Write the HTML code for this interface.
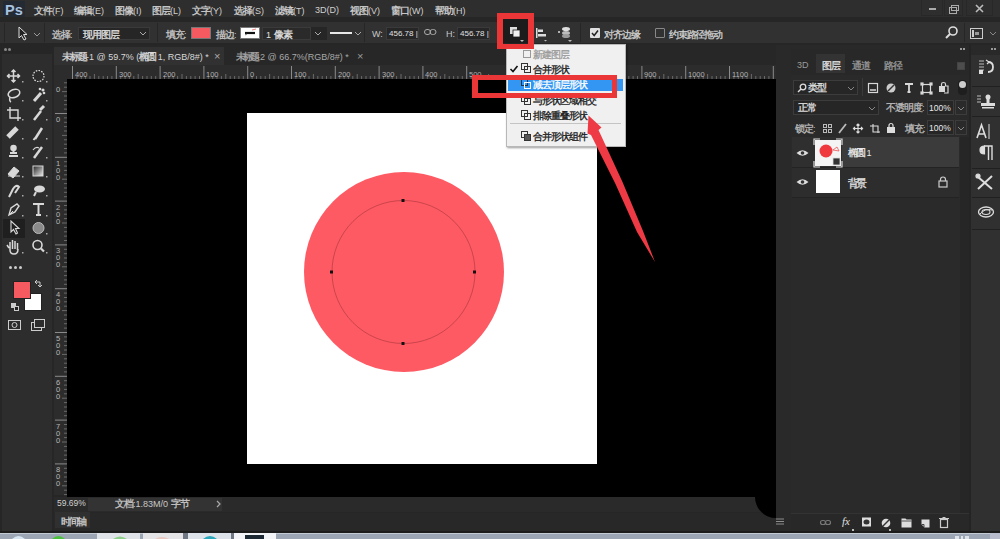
<!DOCTYPE html>
<html><head><meta charset="utf-8">
<style>
*{margin:0;padding:0;box-sizing:border-box}
html,body{width:1000px;height:539px;overflow:hidden;background:#262626;font-family:"Liberation Sans",sans-serif;color:#cfcfcf;font-size:9px}
.a{position:absolute}
.t{position:absolute;white-space:nowrap;line-height:1}
svg{position:absolute;overflow:visible}
#menubar{left:0;top:0;width:1000px;height:17px;background:#2e2e2e}
#opts{left:0;top:22px;width:1000px;height:21px;background:#313131}
#tool{left:2px;top:46px;width:50px;height:486px;background:#2d2d2d}
#tabs{left:54px;top:45px;width:723px;height:20px;background:#272727}
#hrul{left:54px;top:65px;width:723px;height:14px;background:#2c2c2c}
#vrul{left:54px;top:65px;width:13px;height:430px;background:#2c2c2c}
#canvas{left:67px;top:79px;width:709px;height:418px;background:#000}
#doc{left:247px;top:113px;width:350px;height:351px;background:#fff}
#status{left:54px;top:497px;width:722px;height:15px;background:#2a2a2a}
#timeline{left:54px;top:513px;width:736px;height:20px;background:#282828}
#right{left:776px;top:45px;width:224px;height:488px;background:#292929}
#layers{left:791px;top:49px;width:169px;height:484px;background:#2a2a2a}
#taskbar{left:0;top:533px;width:1000px;height:6px;background:#9ba5b3}
.menu{top:6px;font-size:9px;color:#d0d0d0}
.k{display:inline-block;width:9px;font-style:normal;font-size:1.15em;-webkit-text-stroke:0.3px currentColor;text-align:left}
.box{position:absolute;background:#262626;border:1px solid #3a3a3a}
</style></head><body>
<!-- menu bar -->
<div id="menubar" class="a"></div>
<div class="a" style="left:3px;top:1px;width:22px;height:16px;background:#232a34"></div><div class="t" style="left:5px;top:3px;font-size:14.5px;font-weight:bold;color:#a8c2e0;letter-spacing:0px">Ps</div>
<div class="t menu" style="left:34px"><i class="k">文</i><i class="k">件</i>(F)</div>
<div class="t menu" style="left:74px"><i class="k">编</i><i class="k">辑</i>(E)</div>
<div class="t menu" style="left:115px"><i class="k">图</i><i class="k">像</i>(I)</div>
<div class="t menu" style="left:152px"><i class="k">图</i><i class="k">层</i>(L)</div>
<div class="t menu" style="left:192px"><i class="k">文</i><i class="k">字</i>(Y)</div>
<div class="t menu" style="left:234px"><i class="k">选</i><i class="k">择</i>(S)</div>
<div class="t menu" style="left:275px"><i class="k">滤</i><i class="k">镜</i>(T)</div>
<div class="t menu" style="left:315px">3D(D)</div>
<div class="t menu" style="left:350px"><i class="k">视</i><i class="k">图</i>(V)</div>
<div class="t menu" style="left:391px"><i class="k">窗</i><i class="k">口</i>(W)</div>
<div class="t menu" style="left:435px"><i class="k">帮</i><i class="k">助</i>(H)</div>
<!-- window controls -->
<div class="a" style="left:921px;top:0px;width:22px;height:16px;border:1px solid #282828;border-top:none"></div><div class="a" style="left:944px;top:0px;width:19px;height:16px;border:1px solid #282828;border-top:none"></div><div class="a" style="left:966px;top:0px;width:27px;height:16px;border:1px solid #282828;border-top:none"></div>
<div class="a" style="left:929px;top:8px;width:7px;height:2px;background:#aaa"></div>
<svg style="left:948px;top:4px" width="12" height="10"><rect x="1.5" y="3.5" width="7" height="6" fill="none" stroke="#aaa"/><rect x="3.5" y="1.5" width="7" height="5" fill="none" stroke="#aaa"/></svg>
<svg style="left:975px;top:4px" width="10" height="10"><path d="M1 1L8 8M8 1L1 8" stroke="#bbb" stroke-width="1.6"/></svg>

<!-- options bar -->
<div id="opts" class="a"></div>
<div class="a" style="left:4px;top:23px;width:1px;height:19px;background:#262626"></div>
<svg style="left:18px;top:26px" width="10" height="15"><path d="M1 1L1 12L3.5 9.5L6 14L8 13L5.5 8.5L9 8.5Z" fill="#222" stroke="#ddd" stroke-width="1"/></svg>
<svg style="left:33px;top:32px" width="8" height="5"><path d="M1 1L4 4L7 1" fill="none" stroke="#999" stroke-width="1"/></svg>
<div class="a" style="left:44px;top:23px;width:1px;height:19px;background:#262626"></div>
<div class="t" style="left:52px;top:30px;color:#c8c8c8"><i class="k">选</i><i class="k">择</i>:</div>
<div class="box" style="left:78px;top:27px;width:72px;height:13px"></div>
<div class="t" style="left:83px;top:30px;color:#e0e0e0"><i class="k">现</i><i class="k">用</i><i class="k">图</i><i class="k">层</i></div>
<svg style="left:139px;top:31px" width="8" height="5"><path d="M1 1L4 4L7 1" fill="none" stroke="#aaa" stroke-width="1"/></svg>
<div class="a" style="left:157px;top:23px;width:1px;height:19px;background:#262626"></div>
<div class="t" style="left:166px;top:30px;color:#c8c8c8"><i class="k">填</i><i class="k">充</i>:</div>
<div class="a" style="left:191px;top:27px;width:20px;height:12px;background:#f45a5f;border:1px solid #777"></div>
<div class="t" style="left:216px;top:30px;color:#c8c8c8"><i class="k">描</i><i class="k">边</i>:</div>
<div class="a" style="left:240px;top:27px;width:20px;height:12px;background:#fff;border:1px solid #777"></div>
<svg style="left:240px;top:27px" width="20" height="12"><path d="M5 6H15" stroke="#111" stroke-width="2.2"/><path d="M12 3L16 2" stroke="#d66" stroke-width="0.8"/><path d="M5 8L7 7" stroke="#555" stroke-width="0.8"/></svg>
<div class="box" style="left:262px;top:27px;width:65px;height:13px;background:#2a2a2a"></div>
<div class="t" style="left:266px;top:30px;color:#e0e0e0">1 <i class="k">像</i><i class="k">素</i></div>
<div class="a" style="left:310px;top:27px;width:17px;height:13px;background:#262626;border-left:1px solid #3a3a3a"></div>
<svg style="left:314px;top:31px" width="8" height="5"><path d="M1 1L4 4L7 1" fill="none" stroke="#aaa" stroke-width="1"/></svg>
<div class="a" style="left:330px;top:32px;width:22px;height:2px;background:#e8e8e8"></div>
<svg style="left:354px;top:31px" width="8" height="5"><path d="M1 1L4 4L7 1" fill="none" stroke="#aaa" stroke-width="1"/></svg>
<div class="a" style="left:364px;top:23px;width:1px;height:19px;background:#262626"></div>
<div class="t" style="left:372px;top:30px;color:#c8c8c8;font-size:9px">W:</div>
<div class="box" style="left:386px;top:27px;width:33px;height:13px"></div>
<div class="t" style="left:389px;top:30px;color:#e0e0e0;font-size:8px">456.78 |</div>
<svg style="left:424px;top:28px" width="13" height="8"><rect x="0.5" y="1.5" width="6" height="5" rx="2.5" fill="none" stroke="#aaa"/><rect x="6" y="1.5" width="6" height="5" rx="2.5" fill="none" stroke="#aaa"/></svg>
<div class="t" style="left:446px;top:30px;color:#c8c8c8;font-size:9px">H:</div>
<div class="box" style="left:457px;top:27px;width:33px;height:13px"></div>
<div class="t" style="left:460px;top:30px;color:#e0e0e0;font-size:8px">456.78 |</div>
<!-- path ops button (highlighted with red box) -->
<div class="a" style="left:503px;top:19px;width:25px;height:24px;background:#1c1c1c"></div>
<svg style="left:509px;top:26px" width="14" height="14"><rect x="1" y="1" width="7" height="7" fill="#ddd"/><rect x="4" y="4" width="7" height="7" fill="#f0f0f0" stroke="#1c1c1c" stroke-width="0.8"/></svg>

<svg style="left:535px;top:26px" width="14" height="16"><rect x="1" y="2" width="1.5" height="10" fill="#ddd"/><rect x="3" y="3.5" width="5" height="2.5" fill="#ddd"/><rect x="3" y="8" width="8" height="2.5" fill="#ddd"/><path d="M9 14L12 14L10.5 15.5Z" fill="#bbb"/></svg><svg style="left:520px;top:40px" width="6" height="3"><path d="M0 0H4L2 2Z" fill="#bbb"/></svg><svg style="left:568px;top:40px" width="6" height="3"><path d="M0 0H4L2 2Z" fill="#bbb"/></svg>
<svg style="left:557px;top:24px" width="16" height="16"><ellipse cx="9" cy="5" rx="4" ry="2" fill="#ddd"/><ellipse cx="9" cy="9" rx="4" ry="2" fill="#bbb"/><ellipse cx="9" cy="12" rx="4" ry="2" fill="#999"/><circle cx="2" cy="8" r="1" fill="#ddd"/></svg>
<div class="a" style="left:580px;top:23px;width:1px;height:19px;background:#262626"></div>
<div class="a" style="left:590px;top:28px;width:10px;height:10px;background:#e0e0e0;border-radius:1px"></div>
<svg style="left:590px;top:28px" width="10" height="10"><path d="M2 5L4.2 7.5L8 2.5" fill="none" stroke="#222" stroke-width="1.5"/></svg>
<div class="t" style="left:604px;top:30px;color:#d0d0d0"><i class="k">对</i><i class="k">齐</i><i class="k">边</i><i class="k">缘</i></div>
<div class="a" style="left:655px;top:28px;width:10px;height:10px;border:1px solid #888;border-radius:1px"></div>
<div class="t" style="left:669px;top:30px;color:#d0d0d0;font-size:8.7px"><i class="k" style="width:8.8px">约</i><i class="k" style="width:8.8px">束</i><i class="k" style="width:8.8px">路</i><i class="k" style="width:8.8px">径</i><i class="k" style="width:8.8px">拖</i><i class="k" style="width:8.8px">动</i></div>
<svg style="left:945px;top:25px" width="14" height="14"><circle cx="8" cy="6" r="4" fill="none" stroke="#ddd" stroke-width="1.6"/><path d="M5 9L1 13" stroke="#ddd" stroke-width="2"/></svg>
<div class="a" style="left:964px;top:23px;width:1px;height:19px;background:#262626"></div>
<svg style="left:970px;top:28px" width="14" height="12"><rect x="0.5" y="0.5" width="12" height="10" fill="none" stroke="#ccc"/><rect x="2" y="2" width="2" height="7" fill="#ccc"/><rect x="5" y="4" width="4" height="3" fill="#999"/></svg>
<svg style="left:989px;top:31px" width="8" height="5"><path d="M1 1L4 4L7 1" fill="none" stroke="#888" stroke-width="1"/></svg>

<!-- toolbar -->
<div id="tool" class="a"></div>
<div class="a" style="left:2px;top:46px;width:50px;height:8px;background:#262626"></div>
<div class="a" style="left:4px;top:48px;width:3px;height:3px;background:#888;border-radius:50%"></div>
<div class="a" style="left:8px;top:48px;width:3px;height:3px;background:#888;border-radius:50%"></div>
<div id="tools">
<svg style="left:0;top:0" width="54" height="340"><rect x="22" y="81" width="1.5" height="1.5" fill="#aaa"/><rect x="46" y="81" width="1.5" height="1.5" fill="#aaa"/><rect x="22" y="100" width="1.5" height="1.5" fill="#aaa"/><rect x="46" y="100" width="1.5" height="1.5" fill="#aaa"/><rect x="22" y="119" width="1.5" height="1.5" fill="#aaa"/><rect x="46" y="119" width="1.5" height="1.5" fill="#aaa"/><rect x="22" y="138" width="1.5" height="1.5" fill="#aaa"/><rect x="46" y="138" width="1.5" height="1.5" fill="#aaa"/><rect x="22" y="157" width="1.5" height="1.5" fill="#aaa"/><rect x="46" y="157" width="1.5" height="1.5" fill="#aaa"/><rect x="22" y="176" width="1.5" height="1.5" fill="#aaa"/><rect x="46" y="176" width="1.5" height="1.5" fill="#aaa"/><rect x="22" y="195" width="1.5" height="1.5" fill="#aaa"/><rect x="46" y="195" width="1.5" height="1.5" fill="#aaa"/><rect x="22" y="215" width="1.5" height="1.5" fill="#aaa"/><rect x="46" y="215" width="1.5" height="1.5" fill="#aaa"/><rect x="22" y="233" width="1.5" height="1.5" fill="#aaa"/><rect x="46" y="233" width="1.5" height="1.5" fill="#aaa"/><rect x="22" y="252" width="1.5" height="1.5" fill="#aaa"/><rect x="46" y="252" width="1.5" height="1.5" fill="#aaa"/></svg>
<svg style="left:0;top:0" width="54" height="340" fill="none" stroke="#d8d8d8" stroke-width="1.5">
 <!-- move -->
 <path d="M13.5 70V82M7.5 76H19.5M11.5 72L13.5 70L15.5 72M11.5 80L13.5 82L15.5 80M9.5 74L7.5 76L9.5 78M17.5 74L19.5 76L17.5 78"/>
 <!-- marquee ellipse -->
 <circle cx="38.5" cy="76" r="5.5" stroke-dasharray="1.6 1.2" stroke-width="1.2"/>
 <!-- lasso -->
 <ellipse cx="14" cy="93.5" rx="6" ry="4" transform="rotate(-20 14 93.5)"/>
 <path d="M10 97Q9 101 11 102"/>
 <!-- quick select -->
 <path d="M34 101L41 93" stroke-width="3"/>
 <circle cx="43" cy="90" r="0.8" fill="#d8d8d8"/><circle cx="40" cy="89" r="0.6" fill="#d8d8d8"/><circle cx="44" cy="93" r="0.6" fill="#d8d8d8"/>
 <!-- crop -->
 <path d="M10 107V118H21M7 110H18V121" stroke-width="1.4"/>
 <!-- eyedropper -->
 <path d="M34 120L41 111" stroke-width="2.5"/><path d="M40 110L44 106" stroke-width="3"/>
 <!-- healing -->
 <path d="M8 137L17 128" stroke-width="5"/>
 <!-- brush -->
 <path d="M35 139L42 128" stroke-width="2.5"/><path d="M35 138L33.5 140" stroke-width="2"/>
 <!-- stamp -->
 <path d="M9 156H18M10 153H17" stroke-width="2"/><circle cx="13.5" cy="148" r="2.5" fill="#d8d8d8"/><path d="M13.5 150V153" stroke-width="2"/>
 <!-- history brush -->
 <path d="M34 158L42 147" stroke-width="2.5"/><path d="M33 150Q36 146 39 148" stroke-width="1.2"/>
 <!-- eraser -->
 <path d="M8 174L14 167L19 171L13 178Z" fill="#d8d8d8" stroke-width="1"/><path d="M8 176H20" stroke-width="1"/>
 <!-- gradient -->
 <rect x="33" y="166" width="10" height="10" fill="url(#gr)" stroke-width="1"/>
 <!-- smudge -->
 <path d="M9 197L13 189Q16 184 19 187L15 193" stroke-width="2"/>
 <!-- dodge -->
 <ellipse cx="39.5" cy="189" rx="5.5" ry="3.5" fill="#d8d8d8" stroke="none"/><path d="M36 192L34 196" stroke-width="2"/>
 <!-- pen -->
 <path d="M9 215L11 208L17 204L19 206L15 212Z" stroke-width="1.4"/><path d="M9 215L13 211" stroke-width="1"/>
 <!-- type -->
 <path d="M33 204H44M38.5 204V215M36 215H41" stroke-width="2"/>
</svg>
<div class="a" style="left:3px;top:219px;width:22px;height:19px;background:#1f1f1f"></div>
<svg style="left:0;top:0" width="54" height="340" fill="none" stroke="#d8d8d8" stroke-width="1.5">
 <!-- path select -->
 <path d="M11 221V232L13.5 229.5L16 234L17.5 233L15.5 228.5L19 228.5Z" stroke-width="1.1"/>
 <!-- ellipse -->
 <circle cx="38.5" cy="228" r="5.5" fill="#8a8a8a" stroke="#bbb" stroke-width="1"/>
 <!-- hand -->
 <path d="M10 250V242M12.5 249V240M15 249V241M17.5 250V243M10 250Q10 254 14 254Q18 254 18 249M9 248L7 245" stroke-width="1.5"/>
 <!-- zoom -->
 <circle cx="37.5" cy="245" r="4.5" stroke-width="1.6"/><path d="M41 248.5L44 251.5" stroke-width="2.2"/>
</svg>
<div class="a" style="left:9px;top:266px;width:3px;height:3px;background:#ccc;border-radius:50%"></div>
<div class="a" style="left:14px;top:266px;width:3px;height:3px;background:#ccc;border-radius:50%"></div>
<div class="a" style="left:19px;top:266px;width:3px;height:3px;background:#ccc;border-radius:50%"></div>
<div class="a" style="left:24px;top:293px;width:18px;height:18px;background:#fff;border:1px solid #222"></div>
<div class="a" style="left:13px;top:281px;width:18px;height:18px;background:#f45a5f;border:1px solid #222"></div>
<svg style="left:0;top:0" width="54" height="340" fill="none" stroke="#ccc" stroke-width="1">
 <path d="M35 282H40V287M38 285L40 287L42 285M37 280L35 282L37 284"/>
 <rect x="11.5" y="303.5" width="4" height="4" fill="#ccc"/><rect x="14.5" y="306.5" width="4" height="4" fill="#222"/>
 <rect x="8.5" y="320.5" width="12" height="9"/><circle cx="14.5" cy="325" r="2.5"/>
 <rect x="31.5" y="322.5" width="10" height="8"/><rect x="34.5" y="319.5" width="10" height="8" fill="#2d2d2d"/>
</svg>
<svg width="0" height="0"><defs><linearGradient id="gr" x1="0" y1="0" x2="1" y2="1"><stop offset="0" stop-color="#222"/><stop offset="1" stop-color="#eee"/></linearGradient></defs></svg>
</div>

<!-- tabs -->
<div id="tabs" class="a"></div>
<div class="a" style="left:54px;top:47px;width:170px;height:18px;background:#313131"></div>
<div class="t" style="left:62px;top:52px;color:#d8d8d8"><i class="k" style="width:8px">未</i><i class="k" style="width:8px">标</i><i class="k" style="width:8px">题</i>-1 @ 59.7% (<i class="k" style="width:8px">椭</i><i class="k" style="width:8px">圆</i> 1, RGB/8#) *</div>
<div class="t" style="left:214px;top:51px;color:#aaa;font-size:11px">×</div>
<div class="t" style="left:236px;top:52px;color:#a8a8a8"><i class="k" style="width:7px">未</i><i class="k" style="width:7px">标</i><i class="k" style="width:7px">题</i>-2 @ 66.7%(RGB/8#) *</div>
<div class="t" style="left:357px;top:51px;color:#999;font-size:11px">×</div>

<!-- rulers -->
<div id="hrul" class="a"></div>
<div id="vrul" class="a"></div>
<div id="rulers"><svg style="left:0;top:0" width="1000" height="539">
<rect x="72.0" y="66" width="1" height="13" fill="#8a8a8a"/>
<rect x="76.4" y="76" width="1" height="3" fill="#6a6a6a"/>
<rect x="80.8" y="76" width="1" height="3" fill="#6a6a6a"/>
<rect x="85.1" y="76" width="1" height="3" fill="#6a6a6a"/>
<rect x="89.5" y="76" width="1" height="3" fill="#6a6a6a"/>
<rect x="93.9" y="74" width="1" height="5" fill="#6a6a6a"/>
<rect x="98.3" y="76" width="1" height="3" fill="#6a6a6a"/>
<rect x="102.7" y="76" width="1" height="3" fill="#6a6a6a"/>
<rect x="107.0" y="76" width="1" height="3" fill="#6a6a6a"/>
<rect x="111.4" y="76" width="1" height="3" fill="#6a6a6a"/>
<rect x="115.8" y="66" width="1" height="13" fill="#8a8a8a"/>
<rect x="120.2" y="76" width="1" height="3" fill="#6a6a6a"/>
<rect x="124.6" y="76" width="1" height="3" fill="#6a6a6a"/>
<rect x="128.9" y="76" width="1" height="3" fill="#6a6a6a"/>
<rect x="133.3" y="76" width="1" height="3" fill="#6a6a6a"/>
<rect x="137.7" y="74" width="1" height="5" fill="#6a6a6a"/>
<rect x="142.1" y="76" width="1" height="3" fill="#6a6a6a"/>
<rect x="146.5" y="76" width="1" height="3" fill="#6a6a6a"/>
<rect x="150.8" y="76" width="1" height="3" fill="#6a6a6a"/>
<rect x="155.2" y="76" width="1" height="3" fill="#6a6a6a"/>
<rect x="159.6" y="66" width="1" height="13" fill="#8a8a8a"/>
<rect x="164.0" y="76" width="1" height="3" fill="#6a6a6a"/>
<rect x="168.4" y="76" width="1" height="3" fill="#6a6a6a"/>
<rect x="172.7" y="76" width="1" height="3" fill="#6a6a6a"/>
<rect x="177.1" y="76" width="1" height="3" fill="#6a6a6a"/>
<rect x="181.5" y="74" width="1" height="5" fill="#6a6a6a"/>
<rect x="185.9" y="76" width="1" height="3" fill="#6a6a6a"/>
<rect x="190.3" y="76" width="1" height="3" fill="#6a6a6a"/>
<rect x="194.6" y="76" width="1" height="3" fill="#6a6a6a"/>
<rect x="199.0" y="76" width="1" height="3" fill="#6a6a6a"/>
<rect x="203.4" y="66" width="1" height="13" fill="#8a8a8a"/>
<rect x="207.8" y="76" width="1" height="3" fill="#6a6a6a"/>
<rect x="212.2" y="76" width="1" height="3" fill="#6a6a6a"/>
<rect x="216.5" y="76" width="1" height="3" fill="#6a6a6a"/>
<rect x="220.9" y="76" width="1" height="3" fill="#6a6a6a"/>
<rect x="225.3" y="74" width="1" height="5" fill="#6a6a6a"/>
<rect x="229.7" y="76" width="1" height="3" fill="#6a6a6a"/>
<rect x="234.1" y="76" width="1" height="3" fill="#6a6a6a"/>
<rect x="238.4" y="76" width="1" height="3" fill="#6a6a6a"/>
<rect x="242.8" y="76" width="1" height="3" fill="#6a6a6a"/>
<rect x="247.2" y="66" width="1" height="13" fill="#8a8a8a"/>
<rect x="251.6" y="76" width="1" height="3" fill="#6a6a6a"/>
<rect x="256.0" y="76" width="1" height="3" fill="#6a6a6a"/>
<rect x="260.3" y="76" width="1" height="3" fill="#6a6a6a"/>
<rect x="264.7" y="76" width="1" height="3" fill="#6a6a6a"/>
<rect x="269.1" y="74" width="1" height="5" fill="#6a6a6a"/>
<rect x="273.5" y="76" width="1" height="3" fill="#6a6a6a"/>
<rect x="277.9" y="76" width="1" height="3" fill="#6a6a6a"/>
<rect x="282.2" y="76" width="1" height="3" fill="#6a6a6a"/>
<rect x="286.6" y="76" width="1" height="3" fill="#6a6a6a"/>
<rect x="291.0" y="66" width="1" height="13" fill="#8a8a8a"/>
<rect x="295.4" y="76" width="1" height="3" fill="#6a6a6a"/>
<rect x="299.8" y="76" width="1" height="3" fill="#6a6a6a"/>
<rect x="304.1" y="76" width="1" height="3" fill="#6a6a6a"/>
<rect x="308.5" y="76" width="1" height="3" fill="#6a6a6a"/>
<rect x="312.9" y="74" width="1" height="5" fill="#6a6a6a"/>
<rect x="317.3" y="76" width="1" height="3" fill="#6a6a6a"/>
<rect x="321.7" y="76" width="1" height="3" fill="#6a6a6a"/>
<rect x="326.0" y="76" width="1" height="3" fill="#6a6a6a"/>
<rect x="330.4" y="76" width="1" height="3" fill="#6a6a6a"/>
<rect x="334.8" y="66" width="1" height="13" fill="#8a8a8a"/>
<rect x="339.2" y="76" width="1" height="3" fill="#6a6a6a"/>
<rect x="343.6" y="76" width="1" height="3" fill="#6a6a6a"/>
<rect x="347.9" y="76" width="1" height="3" fill="#6a6a6a"/>
<rect x="352.3" y="76" width="1" height="3" fill="#6a6a6a"/>
<rect x="356.7" y="74" width="1" height="5" fill="#6a6a6a"/>
<rect x="361.1" y="76" width="1" height="3" fill="#6a6a6a"/>
<rect x="365.5" y="76" width="1" height="3" fill="#6a6a6a"/>
<rect x="369.8" y="76" width="1" height="3" fill="#6a6a6a"/>
<rect x="374.2" y="76" width="1" height="3" fill="#6a6a6a"/>
<rect x="378.6" y="66" width="1" height="13" fill="#8a8a8a"/>
<rect x="383.0" y="76" width="1" height="3" fill="#6a6a6a"/>
<rect x="387.4" y="76" width="1" height="3" fill="#6a6a6a"/>
<rect x="391.7" y="76" width="1" height="3" fill="#6a6a6a"/>
<rect x="396.1" y="76" width="1" height="3" fill="#6a6a6a"/>
<rect x="400.5" y="74" width="1" height="5" fill="#6a6a6a"/>
<rect x="404.9" y="76" width="1" height="3" fill="#6a6a6a"/>
<rect x="409.3" y="76" width="1" height="3" fill="#6a6a6a"/>
<rect x="413.6" y="76" width="1" height="3" fill="#6a6a6a"/>
<rect x="418.0" y="76" width="1" height="3" fill="#6a6a6a"/>
<rect x="422.4" y="66" width="1" height="13" fill="#8a8a8a"/>
<rect x="426.8" y="76" width="1" height="3" fill="#6a6a6a"/>
<rect x="431.2" y="76" width="1" height="3" fill="#6a6a6a"/>
<rect x="435.5" y="76" width="1" height="3" fill="#6a6a6a"/>
<rect x="439.9" y="76" width="1" height="3" fill="#6a6a6a"/>
<rect x="444.3" y="74" width="1" height="5" fill="#6a6a6a"/>
<rect x="448.7" y="76" width="1" height="3" fill="#6a6a6a"/>
<rect x="453.1" y="76" width="1" height="3" fill="#6a6a6a"/>
<rect x="457.4" y="76" width="1" height="3" fill="#6a6a6a"/>
<rect x="461.8" y="76" width="1" height="3" fill="#6a6a6a"/>
<rect x="466.2" y="66" width="1" height="13" fill="#8a8a8a"/>
<rect x="470.6" y="76" width="1" height="3" fill="#6a6a6a"/>
<rect x="475.0" y="76" width="1" height="3" fill="#6a6a6a"/>
<rect x="479.3" y="76" width="1" height="3" fill="#6a6a6a"/>
<rect x="483.7" y="76" width="1" height="3" fill="#6a6a6a"/>
<rect x="488.1" y="74" width="1" height="5" fill="#6a6a6a"/>
<rect x="492.5" y="76" width="1" height="3" fill="#6a6a6a"/>
<rect x="496.9" y="76" width="1" height="3" fill="#6a6a6a"/>
<rect x="501.2" y="76" width="1" height="3" fill="#6a6a6a"/>
<rect x="505.6" y="76" width="1" height="3" fill="#6a6a6a"/>
<rect x="510.0" y="66" width="1" height="13" fill="#8a8a8a"/>
<rect x="514.4" y="76" width="1" height="3" fill="#6a6a6a"/>
<rect x="518.8" y="76" width="1" height="3" fill="#6a6a6a"/>
<rect x="523.1" y="76" width="1" height="3" fill="#6a6a6a"/>
<rect x="527.5" y="76" width="1" height="3" fill="#6a6a6a"/>
<rect x="531.9" y="74" width="1" height="5" fill="#6a6a6a"/>
<rect x="536.3" y="76" width="1" height="3" fill="#6a6a6a"/>
<rect x="540.7" y="76" width="1" height="3" fill="#6a6a6a"/>
<rect x="545.0" y="76" width="1" height="3" fill="#6a6a6a"/>
<rect x="549.4" y="76" width="1" height="3" fill="#6a6a6a"/>
<rect x="553.8" y="66" width="1" height="13" fill="#8a8a8a"/>
<rect x="558.2" y="76" width="1" height="3" fill="#6a6a6a"/>
<rect x="562.6" y="76" width="1" height="3" fill="#6a6a6a"/>
<rect x="566.9" y="76" width="1" height="3" fill="#6a6a6a"/>
<rect x="571.3" y="76" width="1" height="3" fill="#6a6a6a"/>
<rect x="575.7" y="74" width="1" height="5" fill="#6a6a6a"/>
<rect x="580.1" y="76" width="1" height="3" fill="#6a6a6a"/>
<rect x="584.5" y="76" width="1" height="3" fill="#6a6a6a"/>
<rect x="588.8" y="76" width="1" height="3" fill="#6a6a6a"/>
<rect x="593.2" y="76" width="1" height="3" fill="#6a6a6a"/>
<rect x="597.6" y="66" width="1" height="13" fill="#8a8a8a"/>
<rect x="602.0" y="76" width="1" height="3" fill="#6a6a6a"/>
<rect x="606.4" y="76" width="1" height="3" fill="#6a6a6a"/>
<rect x="610.7" y="76" width="1" height="3" fill="#6a6a6a"/>
<rect x="615.1" y="76" width="1" height="3" fill="#6a6a6a"/>
<rect x="619.5" y="74" width="1" height="5" fill="#6a6a6a"/>
<rect x="623.9" y="76" width="1" height="3" fill="#6a6a6a"/>
<rect x="628.3" y="76" width="1" height="3" fill="#6a6a6a"/>
<rect x="632.6" y="76" width="1" height="3" fill="#6a6a6a"/>
<rect x="637.0" y="76" width="1" height="3" fill="#6a6a6a"/>
<rect x="641.4" y="66" width="1" height="13" fill="#8a8a8a"/>
<rect x="645.8" y="76" width="1" height="3" fill="#6a6a6a"/>
<rect x="650.2" y="76" width="1" height="3" fill="#6a6a6a"/>
<rect x="654.5" y="76" width="1" height="3" fill="#6a6a6a"/>
<rect x="658.9" y="76" width="1" height="3" fill="#6a6a6a"/>
<rect x="663.3" y="74" width="1" height="5" fill="#6a6a6a"/>
<rect x="667.7" y="76" width="1" height="3" fill="#6a6a6a"/>
<rect x="672.1" y="76" width="1" height="3" fill="#6a6a6a"/>
<rect x="676.4" y="76" width="1" height="3" fill="#6a6a6a"/>
<rect x="680.8" y="76" width="1" height="3" fill="#6a6a6a"/>
<rect x="685.2" y="66" width="1" height="13" fill="#8a8a8a"/>
<rect x="689.6" y="76" width="1" height="3" fill="#6a6a6a"/>
<rect x="694.0" y="76" width="1" height="3" fill="#6a6a6a"/>
<rect x="698.3" y="76" width="1" height="3" fill="#6a6a6a"/>
<rect x="702.7" y="76" width="1" height="3" fill="#6a6a6a"/>
<rect x="707.1" y="74" width="1" height="5" fill="#6a6a6a"/>
<rect x="711.5" y="76" width="1" height="3" fill="#6a6a6a"/>
<rect x="715.9" y="76" width="1" height="3" fill="#6a6a6a"/>
<rect x="720.2" y="76" width="1" height="3" fill="#6a6a6a"/>
<rect x="724.6" y="76" width="1" height="3" fill="#6a6a6a"/>
<rect x="729.0" y="66" width="1" height="13" fill="#8a8a8a"/>
<rect x="733.4" y="76" width="1" height="3" fill="#6a6a6a"/>
<rect x="737.8" y="76" width="1" height="3" fill="#6a6a6a"/>
<rect x="742.1" y="76" width="1" height="3" fill="#6a6a6a"/>
<rect x="746.5" y="76" width="1" height="3" fill="#6a6a6a"/>
<rect x="750.9" y="74" width="1" height="5" fill="#6a6a6a"/>
<rect x="755.3" y="76" width="1" height="3" fill="#6a6a6a"/>
<rect x="759.7" y="76" width="1" height="3" fill="#6a6a6a"/>
<rect x="764.0" y="76" width="1" height="3" fill="#6a6a6a"/>
<rect x="768.4" y="76" width="1" height="3" fill="#6a6a6a"/>
<rect x="772.8" y="66" width="1" height="13" fill="#8a8a8a"/>
<rect x="64" y="82.3" width="3" height="1" fill="#6a6a6a"/>
<rect x="64" y="86.7" width="3" height="1" fill="#6a6a6a"/>
<rect x="62" y="91.1" width="5" height="1" fill="#6a6a6a"/>
<rect x="64" y="95.5" width="3" height="1" fill="#6a6a6a"/>
<rect x="64" y="99.9" width="3" height="1" fill="#6a6a6a"/>
<rect x="64" y="104.2" width="3" height="1" fill="#6a6a6a"/>
<rect x="64" y="108.6" width="3" height="1" fill="#6a6a6a"/>
<rect x="55" y="113.0" width="12" height="1" fill="#8a8a8a"/>
<rect x="64" y="117.4" width="3" height="1" fill="#6a6a6a"/>
<rect x="64" y="121.8" width="3" height="1" fill="#6a6a6a"/>
<rect x="64" y="126.1" width="3" height="1" fill="#6a6a6a"/>
<rect x="64" y="130.5" width="3" height="1" fill="#6a6a6a"/>
<rect x="62" y="134.9" width="5" height="1" fill="#6a6a6a"/>
<rect x="64" y="139.3" width="3" height="1" fill="#6a6a6a"/>
<rect x="64" y="143.7" width="3" height="1" fill="#6a6a6a"/>
<rect x="64" y="148.0" width="3" height="1" fill="#6a6a6a"/>
<rect x="64" y="152.4" width="3" height="1" fill="#6a6a6a"/>
<rect x="55" y="156.8" width="12" height="1" fill="#8a8a8a"/>
<rect x="64" y="161.2" width="3" height="1" fill="#6a6a6a"/>
<rect x="64" y="165.6" width="3" height="1" fill="#6a6a6a"/>
<rect x="64" y="169.9" width="3" height="1" fill="#6a6a6a"/>
<rect x="64" y="174.3" width="3" height="1" fill="#6a6a6a"/>
<rect x="62" y="178.7" width="5" height="1" fill="#6a6a6a"/>
<rect x="64" y="183.1" width="3" height="1" fill="#6a6a6a"/>
<rect x="64" y="187.5" width="3" height="1" fill="#6a6a6a"/>
<rect x="64" y="191.8" width="3" height="1" fill="#6a6a6a"/>
<rect x="64" y="196.2" width="3" height="1" fill="#6a6a6a"/>
<rect x="55" y="200.6" width="12" height="1" fill="#8a8a8a"/>
<rect x="64" y="205.0" width="3" height="1" fill="#6a6a6a"/>
<rect x="64" y="209.4" width="3" height="1" fill="#6a6a6a"/>
<rect x="64" y="213.7" width="3" height="1" fill="#6a6a6a"/>
<rect x="64" y="218.1" width="3" height="1" fill="#6a6a6a"/>
<rect x="62" y="222.5" width="5" height="1" fill="#6a6a6a"/>
<rect x="64" y="226.9" width="3" height="1" fill="#6a6a6a"/>
<rect x="64" y="231.3" width="3" height="1" fill="#6a6a6a"/>
<rect x="64" y="235.6" width="3" height="1" fill="#6a6a6a"/>
<rect x="64" y="240.0" width="3" height="1" fill="#6a6a6a"/>
<rect x="55" y="244.4" width="12" height="1" fill="#8a8a8a"/>
<rect x="64" y="248.8" width="3" height="1" fill="#6a6a6a"/>
<rect x="64" y="253.2" width="3" height="1" fill="#6a6a6a"/>
<rect x="64" y="257.5" width="3" height="1" fill="#6a6a6a"/>
<rect x="64" y="261.9" width="3" height="1" fill="#6a6a6a"/>
<rect x="62" y="266.3" width="5" height="1" fill="#6a6a6a"/>
<rect x="64" y="270.7" width="3" height="1" fill="#6a6a6a"/>
<rect x="64" y="275.1" width="3" height="1" fill="#6a6a6a"/>
<rect x="64" y="279.4" width="3" height="1" fill="#6a6a6a"/>
<rect x="64" y="283.8" width="3" height="1" fill="#6a6a6a"/>
<rect x="55" y="288.2" width="12" height="1" fill="#8a8a8a"/>
<rect x="64" y="292.6" width="3" height="1" fill="#6a6a6a"/>
<rect x="64" y="297.0" width="3" height="1" fill="#6a6a6a"/>
<rect x="64" y="301.3" width="3" height="1" fill="#6a6a6a"/>
<rect x="64" y="305.7" width="3" height="1" fill="#6a6a6a"/>
<rect x="62" y="310.1" width="5" height="1" fill="#6a6a6a"/>
<rect x="64" y="314.5" width="3" height="1" fill="#6a6a6a"/>
<rect x="64" y="318.9" width="3" height="1" fill="#6a6a6a"/>
<rect x="64" y="323.2" width="3" height="1" fill="#6a6a6a"/>
<rect x="64" y="327.6" width="3" height="1" fill="#6a6a6a"/>
<rect x="55" y="332.0" width="12" height="1" fill="#8a8a8a"/>
<rect x="64" y="336.4" width="3" height="1" fill="#6a6a6a"/>
<rect x="64" y="340.8" width="3" height="1" fill="#6a6a6a"/>
<rect x="64" y="345.1" width="3" height="1" fill="#6a6a6a"/>
<rect x="64" y="349.5" width="3" height="1" fill="#6a6a6a"/>
<rect x="62" y="353.9" width="5" height="1" fill="#6a6a6a"/>
<rect x="64" y="358.3" width="3" height="1" fill="#6a6a6a"/>
<rect x="64" y="362.7" width="3" height="1" fill="#6a6a6a"/>
<rect x="64" y="367.0" width="3" height="1" fill="#6a6a6a"/>
<rect x="64" y="371.4" width="3" height="1" fill="#6a6a6a"/>
<rect x="55" y="375.8" width="12" height="1" fill="#8a8a8a"/>
<rect x="64" y="380.2" width="3" height="1" fill="#6a6a6a"/>
<rect x="64" y="384.6" width="3" height="1" fill="#6a6a6a"/>
<rect x="64" y="388.9" width="3" height="1" fill="#6a6a6a"/>
<rect x="64" y="393.3" width="3" height="1" fill="#6a6a6a"/>
<rect x="62" y="397.7" width="5" height="1" fill="#6a6a6a"/>
<rect x="64" y="402.1" width="3" height="1" fill="#6a6a6a"/>
<rect x="64" y="406.5" width="3" height="1" fill="#6a6a6a"/>
<rect x="64" y="410.8" width="3" height="1" fill="#6a6a6a"/>
<rect x="64" y="415.2" width="3" height="1" fill="#6a6a6a"/>
<rect x="55" y="419.6" width="12" height="1" fill="#8a8a8a"/>
<rect x="64" y="424.0" width="3" height="1" fill="#6a6a6a"/>
<rect x="64" y="428.4" width="3" height="1" fill="#6a6a6a"/>
<rect x="64" y="432.7" width="3" height="1" fill="#6a6a6a"/>
<rect x="64" y="437.1" width="3" height="1" fill="#6a6a6a"/>
<rect x="62" y="441.5" width="5" height="1" fill="#6a6a6a"/>
<rect x="64" y="445.9" width="3" height="1" fill="#6a6a6a"/>
<rect x="64" y="450.3" width="3" height="1" fill="#6a6a6a"/>
<rect x="64" y="454.6" width="3" height="1" fill="#6a6a6a"/>
<rect x="64" y="459.0" width="3" height="1" fill="#6a6a6a"/>
<rect x="55" y="463.4" width="12" height="1" fill="#8a8a8a"/>
<rect x="64" y="467.8" width="3" height="1" fill="#6a6a6a"/>
<rect x="64" y="472.2" width="3" height="1" fill="#6a6a6a"/>
<rect x="64" y="476.5" width="3" height="1" fill="#6a6a6a"/>
<rect x="64" y="480.9" width="3" height="1" fill="#6a6a6a"/>
<rect x="62" y="485.3" width="5" height="1" fill="#6a6a6a"/>
<rect x="64" y="489.7" width="3" height="1" fill="#6a6a6a"/>
<rect x="64" y="494.1" width="3" height="1" fill="#6a6a6a"/>
</svg>
<div class="t" style="left:75px;top:71px;font-size:7.5px;color:#b0b0b0">400</div>
<div class="t" style="left:119px;top:71px;font-size:7.5px;color:#b0b0b0">300</div>
<div class="t" style="left:163px;top:71px;font-size:7.5px;color:#b0b0b0">200</div>
<div class="t" style="left:206px;top:71px;font-size:7.5px;color:#b0b0b0">100</div>
<div class="t" style="left:250px;top:71px;font-size:7.5px;color:#b0b0b0">0</div>
<div class="t" style="left:294px;top:71px;font-size:7.5px;color:#b0b0b0">100</div>
<div class="t" style="left:338px;top:71px;font-size:7.5px;color:#b0b0b0">200</div>
<div class="t" style="left:382px;top:71px;font-size:7.5px;color:#b0b0b0">300</div>
<div class="t" style="left:425px;top:71px;font-size:7.5px;color:#b0b0b0">400</div>
<div class="t" style="left:469px;top:71px;font-size:7.5px;color:#b0b0b0">500</div>
<div class="t" style="left:513px;top:71px;font-size:7.5px;color:#b0b0b0">600</div>
<div class="t" style="left:557px;top:71px;font-size:7.5px;color:#b0b0b0">700</div>
<div class="t" style="left:601px;top:71px;font-size:7.5px;color:#b0b0b0">800</div>
<div class="t" style="left:644px;top:71px;font-size:7.5px;color:#b0b0b0">900</div>
<div class="t" style="left:688px;top:71px;font-size:7.5px;color:#b0b0b0">1000</div>
<div class="t" style="left:732px;top:71px;font-size:7.5px;color:#b0b0b0">1100</div>
<div class="t" style="left:776px;top:71px;font-size:7.5px;color:#b0b0b0">1</div>
<div class="t" style="left:56px;top:86px;font-size:7.5px;color:#b8b8b8">0</div>
<div class="t" style="left:56px;top:116px;font-size:7.5px;color:#b8b8b8">0</div>
<div class="t" style="left:56px;top:160px;font-size:7.5px;color:#b8b8b8">1</div>
<div class="t" style="left:56px;top:167px;font-size:7.5px;color:#b8b8b8">0</div>
<div class="t" style="left:56px;top:174px;font-size:7.5px;color:#b8b8b8">0</div>
<div class="t" style="left:56px;top:204px;font-size:7.5px;color:#b8b8b8">2</div>
<div class="t" style="left:56px;top:211px;font-size:7.5px;color:#b8b8b8">0</div>
<div class="t" style="left:56px;top:218px;font-size:7.5px;color:#b8b8b8">0</div>
<div class="t" style="left:56px;top:247px;font-size:7.5px;color:#b8b8b8">3</div>
<div class="t" style="left:56px;top:254px;font-size:7.5px;color:#b8b8b8">0</div>
<div class="t" style="left:56px;top:261px;font-size:7.5px;color:#b8b8b8">0</div>
<div class="t" style="left:56px;top:291px;font-size:7.5px;color:#b8b8b8">4</div>
<div class="t" style="left:56px;top:298px;font-size:7.5px;color:#b8b8b8">0</div>
<div class="t" style="left:56px;top:305px;font-size:7.5px;color:#b8b8b8">0</div>
<div class="t" style="left:56px;top:335px;font-size:7.5px;color:#b8b8b8">5</div>
<div class="t" style="left:56px;top:342px;font-size:7.5px;color:#b8b8b8">0</div>
<div class="t" style="left:56px;top:349px;font-size:7.5px;color:#b8b8b8">0</div>
<div class="t" style="left:56px;top:379px;font-size:7.5px;color:#b8b8b8">6</div>
<div class="t" style="left:56px;top:386px;font-size:7.5px;color:#b8b8b8">0</div>
<div class="t" style="left:56px;top:393px;font-size:7.5px;color:#b8b8b8">0</div>
<div class="t" style="left:56px;top:423px;font-size:7.5px;color:#b8b8b8">7</div>
<div class="t" style="left:56px;top:430px;font-size:7.5px;color:#b8b8b8">0</div>
<div class="t" style="left:56px;top:437px;font-size:7.5px;color:#b8b8b8">0</div>
<div class="t" style="left:56px;top:466px;font-size:7.5px;color:#b8b8b8">8</div>
<div class="t" style="left:56px;top:473px;font-size:7.5px;color:#b8b8b8">0</div>
<div class="t" style="left:56px;top:480px;font-size:7.5px;color:#b8b8b8">0</div>
<div class="a" style="left:54px;top:65px;width:13px;height:14px;background:#2c2c2c"></div></div>

<!-- canvas -->
<div id="canvas" class="a"></div>
<div id="doc" class="a"></div>
<svg style="left:0;top:0" width="1000" height="539">
  <circle cx="404" cy="272" r="100" fill="#fd5a64"/>
  <circle cx="403.5" cy="272" r="71.5" fill="none" stroke="#9a2e31" stroke-width="0.5"/>
  <rect x="401.5" y="199" width="3" height="3" fill="#111"/>
  <rect x="401.5" y="342" width="3" height="3" fill="#111"/>
  <rect x="330" y="270.5" width="3" height="3" fill="#111"/>
  <rect x="473" y="270.5" width="3" height="3" fill="#111"/>
</svg>

<!-- status / timeline -->
<div id="status" class="a"></div>
<div class="a" style="left:88px;top:498px;width:134px;height:13px;background:#333"></div>
<div class="t" style="left:57px;top:499px;color:#d0d0d0;font-size:8.5px">59.69%</div>
<div class="t" style="left:115px;top:499px;color:#c8c8c8;font-size:9px"><i class="k">文</i><i class="k">档</i>:1.83M/0 <i class="k">字</i><i class="k">节</i></div>
<svg style="left:216px;top:500px" width="6" height="8"><path d="M1 1L4 4L1 7" fill="none" stroke="#aaa" stroke-width="1.2"/></svg>
<div id="timeline" class="a"></div>
<svg style="left:0;top:0" width="1000" height="539"><path d="M755 497A21 21 0 0 0 776 518V497Z" fill="#000"/></svg>
<div class="a" style="left:55px;top:512px;width:35px;height:16px;background:#303030"></div>
<div class="t" style="left:61px;top:517px;color:#d0d0d0;font-size:9px"><i class="k" style="width:8px">时</i><i class="k" style="width:8px">间</i><i class="k" style="width:8px">轴</i></div>

<!-- right panels -->
<div id="right" class="a"></div>
<div id="layers" class="a"></div>
<div id="rightpanel">
<!-- panel tabs strip -->
<div class="a" style="left:791px;top:49px;width:178px;height:26px;background:#282828"></div>
<div class="a" style="left:816px;top:54px;width:29px;height:19px;background:#333"></div>
<div class="t" style="left:797px;top:61px;color:#9a9a9a;font-size:9px">3D</div>
<div class="t" style="left:822px;top:61px;color:#e0e0e0;font-size:9px"><i class="k">图</i><i class="k">层</i></div>
<div class="t" style="left:852px;top:61px;color:#9a9a9a;font-size:9px"><i class="k">通</i><i class="k">道</i></div>
<div class="t" style="left:884px;top:61px;color:#9a9a9a;font-size:9px"><i class="k">路</i><i class="k">径</i></div>
<svg style="left:956px;top:61px" width="10" height="10"><rect x="1" y="1" width="8" height="8" fill="#444"/><path d="M2 3H8M2 5H8M2 7H8" stroke="#666" stroke-width="0.6"/></svg>
<div class="a" style="left:960px;top:48px;width:2px;height:2px;background:#999"></div>
<div class="a" style="left:963px;top:48px;width:2px;height:2px;background:#999"></div>
<div class="a" style="left:991px;top:48px;width:2px;height:2px;background:#999"></div>
<div class="a" style="left:994px;top:48px;width:2px;height:2px;background:#999"></div>
<!-- filter row -->
<div class="box" style="left:793px;top:80px;width:65px;height:15px;background:#262626;border-color:#3c3c3c"></div>
<svg style="left:797px;top:83px" width="10" height="10"><circle cx="6" cy="4" r="2.8" fill="none" stroke="#ddd" stroke-width="1.3"/><path d="M4 6L1 9" stroke="#ddd" stroke-width="1.5"/></svg>
<div class="t" style="left:808px;top:83px;color:#e0e0e0;font-size:9px"><i class="k">类</i><i class="k">型</i></div>
<svg style="left:847px;top:86px" width="8" height="5"><path d="M1 1L4 4L7 1" fill="none" stroke="#888" stroke-width="1"/></svg>
<div class="a" style="left:862px;top:78px;width:1px;height:18px;background:#3a3a3a"></div>
<svg style="left:0;top:0" width="1000" height="539" fill="none" stroke="#d8d8d8" stroke-width="1.2">
 <rect x="868.5" y="83.5" width="9" height="9"/><path d="M870 90H876" stroke-width="1.5"/>
 <circle cx="891" cy="88" r="4.5" fill="#ccc" stroke="none"/><path d="M888 91L894 85" stroke="#333" stroke-width="1.4"/>
 <path d="M905 84H913M909 84V92M907.5 92H910.5" stroke-width="1.8"/>
 <rect x="922.5" y="84.5" width="8" height="8"/><rect x="921" y="83" width="2" height="2" fill="#d8d8d8"/><rect x="930" y="83" width="2" height="2" fill="#d8d8d8"/><rect x="921" y="92" width="2" height="2" fill="#d8d8d8"/><rect x="930" y="92" width="2" height="2" fill="#d8d8d8"/>
 <path d="M941.5 86V84Q941.5 82.5 943.5 82.5Q945.5 82.5 945.5 84V86" /><rect x="939" y="86" width="6" height="6" fill="#d8d8d8" stroke="none"/><path d="M945 86H948V93H944" />
</svg>
<div class="a" style="left:958px;top:80px;width:9px;height:15px;background:#1e1e1e;border-radius:4px"></div>
<div class="a" style="left:959px;top:81px;width:7px;height:7px;background:#ccc;border-radius:50%"></div>
<!-- blend row -->
<div class="box" style="left:793px;top:100px;width:86px;height:15px;background:#262626;border-color:#3c3c3c"></div>
<div class="t" style="left:798px;top:103px;color:#e0e0e0;font-size:9px"><i class="k">正</i><i class="k">常</i></div>
<svg style="left:868px;top:106px" width="8" height="5"><path d="M1 1L4 4L7 1" fill="none" stroke="#888" stroke-width="1"/></svg>
<div class="t" style="left:886px;top:103px;color:#bdbdbd;font-size:9px"><i class="k">不</i><i class="k">透</i><i class="k">明</i><i class="k">度</i>:</div>
<div class="box" style="left:927px;top:100px;width:27px;height:15px;background:#262626;border-color:#3c3c3c"></div>
<div class="t" style="left:929px;top:104px;color:#e8e8e8;font-size:8.5px">100%</div>
<div class="box" style="left:955px;top:100px;width:12px;height:15px;background:#2a2a2a;border-color:#3c3c3c"></div>
<svg style="left:957px;top:106px" width="8" height="5"><path d="M1 1L4 4L7 1" fill="none" stroke="#888" stroke-width="1"/></svg>
<!-- lock row -->
<div class="t" style="left:795px;top:124px;color:#bdbdbd;font-size:9px"><i class="k">锁</i><i class="k">定</i>:</div>
<svg style="left:0;top:0" width="1000" height="539" fill="none" stroke="#bbb" stroke-width="1">
 <rect x="823.5" y="124.5" width="3" height="3"/><rect x="828.5" y="124.5" width="3" height="3"/><rect x="823.5" y="129.5" width="3" height="3"/><rect x="828.5" y="129.5" width="3" height="3"/>
 <path d="M839 133L846 124" stroke-width="1.8"/>
 <path d="M858 124V133M853.5 128.5H862.5M856.5 125.5L858 124L859.5 125.5M856.5 131.5L858 133L859.5 131.5M855 127L853.5 128.5L855 130M861 127L862.5 128.5L861 130" stroke="#ddd" stroke-width="1.2"/>
 <path d="M873 124V132H880M870 126H878V133" stroke="#ddd" stroke-width="1.1"/>
 <path d="M889 127V125.5Q889 123.5 891 123.5Q893 123.5 893 125.5V127" stroke="#ddd" stroke-width="1.2"/><rect x="887" y="127" width="8" height="6" fill="#ddd" stroke="none"/>
</svg>
<div class="t" style="left:905px;top:124px;color:#bdbdbd;font-size:9px"><i class="k">填</i><i class="k">充</i>:</div>
<div class="box" style="left:927px;top:120px;width:27px;height:15px;background:#262626;border-color:#3c3c3c"></div>
<div class="t" style="left:929px;top:124px;color:#e8e8e8;font-size:8.5px">100%</div>
<div class="box" style="left:955px;top:120px;width:12px;height:15px;background:#2a2a2a;border-color:#3c3c3c"></div>
<svg style="left:957px;top:126px" width="8" height="5"><path d="M1 1L4 4L7 1" fill="none" stroke="#888" stroke-width="1"/></svg>
<!-- layer rows -->
<div class="a" style="left:792px;top:137px;width:167px;height:30px;background:#3b3b3b"></div><div class="a" style="left:792px;top:137px;width:50px;height:30px;background:#2f2f2f"></div>
<div class="a" style="left:792px;top:167px;width:167px;height:1px;background:#232323"></div>
<div class="a" style="left:792px;top:168px;width:167px;height:29px;background:#2d2d2d"></div>
<div class="a" style="left:792px;top:197px;width:167px;height:1px;background:#232323"></div>

<svg style="left:796px;top:149px" width="13" height="8"><path d="M0.5 4Q6.5 -1.5 12.5 4Q6.5 9.5 0.5 4Z" fill="#ddd"/><circle cx="6.5" cy="4" r="1.8" fill="#333"/></svg>
<svg style="left:796px;top:178px" width="13" height="8"><path d="M0.5 4Q6.5 -1.5 12.5 4Q6.5 9.5 0.5 4Z" fill="#ddd"/><circle cx="6.5" cy="4" r="1.8" fill="#333"/></svg>
<div class="a" style="left:815px;top:140px;width:26px;height:26px;background:#f4f4f4"></div>
<svg style="left:813px;top:138px" width="30" height="30"><circle cx="13" cy="13" r="6.5" fill="#f0393f"/><path d="M1 7V1H7M23 1H29V7M1 23V29H7M29 23V29H23" fill="none" stroke="#ddd" stroke-width="1.2"/><rect x="20" y="20" width="7" height="7" fill="#333" stroke="#ddd" stroke-width="0.8"/><path d="M20 12L24 9L26 13Z" fill="none" stroke="#e55" stroke-width="0.8"/></svg>
<div class="t" style="left:848px;top:148px;color:#e8e8e8;font-size:9px"><i class="k" style="width:8px">椭</i><i class="k" style="width:8px">圆</i> 1</div>
<div class="a" style="left:816px;top:170px;width:24px;height:23px;background:#fff"></div>
<div class="t" style="left:848px;top:178px;color:#e0e0e0;font-size:9.5px"><i class="k" style="width:8px">背</i><i class="k" style="width:8px">景</i></div>
<svg style="left:938px;top:176px" width="10" height="11"><path d="M2.5 5V3.5Q2.5 1 5 1Q7.5 1 7.5 3.5V5" fill="none" stroke="#ccc" stroke-width="1.2"/><rect x="1" y="5" width="8" height="6" fill="none" stroke="#ccc" stroke-width="1.2"/></svg>
<!-- panel bottom bar -->
<div class="a" style="left:791px;top:513px;width:178px;height:20px;background:#282828;border-top:1px solid #333"></div>
<svg style="left:0;top:0" width="1000" height="539" fill="none" stroke="#ddd" stroke-width="1.2">
 <path d="M776 519H784M776 521.5H784M776 524H784" stroke="#999" stroke-width="0.9"/>
 <rect x="820.5" y="520.5" width="5" height="4" rx="2" stroke="#777"/><rect x="825.5" y="520.5" width="5" height="4" rx="2" stroke="#777"/>
 <rect x="862" y="517.5" width="9" height="9" fill="#ddd" stroke="none"/><ellipse cx="866.5" cy="522" rx="3" ry="2.5" fill="#333" stroke="none"/>
 <circle cx="886" cy="523" r="4.3" fill="#ddd" stroke="none"/><path d="M883 526L889 520" stroke="#333" stroke-width="1.5"/>
 <path d="M901.5 518.5H905.5L906.5 519.5H911.5V527.5H901.5Z" fill="#ddd" stroke="none"/><path d="M901.5 521H911.5" stroke="#333" stroke-width="0.8"/>
 <path d="M921.5 519.5H929.5V527.5H924.5L921.5 524.5Z" fill="#ddd" stroke="none"/><path d="M924 527L924 524.5L921.5 524.5" stroke="#333" stroke-width="0.9"/>
 <rect x="940.5" y="519.5" width="7" height="8" stroke="#ccc"/><path d="M939 518.5H949M942.5 517.5H945.5" stroke="#ccc"/>
</svg>
<div class="t" style="left:842px;top:516px;color:#e0e0e0;font-size:11px;font-style:italic;font-family:'Liberation Serif',serif">fx</div>
<div class="a" style="left:852px;top:529px;width:2px;height:2px;background:#bbb"></div>
<div class="a" style="left:889px;top:529px;width:2px;height:2px;background:#bbb"></div>
<!-- right icon column -->
<div class="a" style="left:969px;top:45px;width:2px;height:488px;background:#242424"></div><div class="a" style="left:960px;top:137px;width:9px;height:376px;background:#262626"></div>
<div class="a" style="left:971px;top:55px;width:29px;height:478px;background:#303030"></div>
<div class="a" style="left:972px;top:86px;width:28px;height:1px;background:#202020"></div>
<div class="a" style="left:972px;top:116px;width:28px;height:1px;background:#202020"></div>
<div class="a" style="left:972px;top:168px;width:28px;height:1px;background:#202020"></div>
<div class="a" style="left:972px;top:197px;width:28px;height:1px;background:#202020"></div>
<div class="a" style="left:972px;top:229px;width:28px;height:1px;background:#202020"></div>
<svg style="left:0;top:0" width="1000" height="539" fill="none" stroke="#ddd" stroke-width="1.2">
 <path d="M979 61H984M979 64H984M979 67H984M979 70H984" stroke="#bbb"/><rect x="979" y="70" width="4" height="4" fill="#ddd" stroke="none"/>
 <path d="M988 62Q993 62 993 67Q993 72 988 72" stroke-width="1.8"/><path d="M986 60L989 62L987 64" stroke-width="1.2"/>
 <path d="M977 96H981M977 99H981M977 102H981" stroke="#bbb"/>
 <circle cx="988" cy="97" r="2.5" fill="#ddd" stroke="none"/><rect x="986.5" y="99" width="3" height="4" fill="#ddd" stroke="none"/><rect x="981" y="103" width="14" height="3" fill="#ddd" stroke="none"/><rect x="982" y="107" width="12" height="1.5" fill="#ddd" stroke="none"/>
 <path d="M977 138L981.5 125L986 138M978.5 134H984.5" stroke-width="1.6"/><path d="M989 124V139" stroke-width="1"/>
 <path d="M984 146H992V160M988.5 146V160" stroke-width="1.4"/><path d="M984.5 146Q980 146 980 150Q980 154 984.5 154Z" fill="#ddd"/>
 <path d="M978 177L992 189M992 176L978 189" stroke-width="2"/><circle cx="978" cy="176" r="2" fill="#ddd"/>
 <ellipse cx="986" cy="212" rx="7.5" ry="5" stroke-width="1.3"/><ellipse cx="986" cy="212" rx="4" ry="2.5" stroke-width="1.1"/><path d="M980 214Q985 208 992 210" stroke-width="1"/>
</svg>
</div>

<!-- popup menu -->
<div id="popup">
<div class="a" style="left:506px;top:44px;width:120px;height:103px;background:#f0f0f0;border:1px solid #b8b8b8;box-shadow:1px 1px 2px rgba(0,0,0,.4)"></div>
<svg style="left:522px;top:49px" width="10" height="10"><rect x="1.5" y="1.5" width="7" height="7" fill="none" stroke="#999"/></svg>
<div class="t" style="left:533px;top:50px;font-size:9px;color:#9a9a9a"><i class="k">新</i><i class="k">建</i><i class="k">图</i><i class="k">层</i></div>
<svg style="left:509px;top:64px" width="10" height="10"><path d="M1.5 5L4 7.5L8.5 2" fill="none" stroke="#111" stroke-width="1.6"/></svg>
<svg style="left:520px;top:62px" width="12" height="12"><rect x="1.5" y="1.5" width="6" height="6" fill="none" stroke="#333"/><rect x="4.5" y="4.5" width="6" height="6" fill="none" stroke="#333"/></svg>
<div class="t" style="left:533px;top:65px;font-size:9px;color:#1a1a1a"><i class="k">合</i><i class="k">并</i><i class="k">形</i><i class="k">状</i></div>
<div class="a" style="left:508px;top:79px;width:115px;height:12px;background:#3396f2"></div>
<svg style="left:520px;top:78px" width="12" height="12"><rect x="1.5" y="1.5" width="6" height="6" fill="none" stroke="#234"/><rect x="4.5" y="4.5" width="6" height="6" fill="none" stroke="#fff"/></svg>
<div class="t" style="left:533px;top:80px;font-size:9px;color:#fff"><i class="k">减</i><i class="k">去</i><i class="k">顶</i><i class="k">层</i><i class="k">形</i><i class="k">状</i></div>
<svg style="left:520px;top:94px" width="12" height="12"><rect x="1.5" y="1.5" width="6" height="6" fill="none" stroke="#333"/><rect x="4.5" y="4.5" width="6" height="6" fill="none" stroke="#333"/></svg>
<div class="t" style="left:533px;top:96px;font-size:9px;color:#1a1a1a"><i class="k">与</i><i class="k">形</i><i class="k">状</i><i class="k">区</i><i class="k">域</i><i class="k">相</i><i class="k">交</i></div>
<svg style="left:520px;top:109px" width="12" height="12"><rect x="1.5" y="1.5" width="6" height="6" fill="none" stroke="#333"/><rect x="4.5" y="4.5" width="6" height="6" fill="none" stroke="#333"/></svg>
<div class="t" style="left:533px;top:111px;font-size:9px;color:#1a1a1a"><i class="k">排</i><i class="k">除</i><i class="k">重</i><i class="k">叠</i><i class="k">形</i><i class="k">状</i></div>
<div class="a" style="left:510px;top:123px;width:111px;height:1px;background:#c4c4c4"></div>
<svg style="left:520px;top:130px" width="12" height="12"><rect x="1.5" y="1.5" width="6" height="6" fill="none" stroke="#333"/><rect x="4.5" y="4.5" width="6" height="6" fill="#555" stroke="#333"/></svg>
<div class="t" style="left:533px;top:132px;font-size:9px;color:#1a1a1a"><i class="k">合</i><i class="k">并</i><i class="k">形</i><i class="k">状</i><i class="k">组</i><i class="k">件</i></div>
<!-- red highlight box -->
<div class="a" style="left:497px;top:13px;width:37px;height:36px;border:6px solid #ea3636;border-bottom-width:5px"></div>
<div class="a" style="left:472px;top:75px;width:145px;height:23px;border:5px solid #ea3636;border-left-width:6px"></div>
</div>
<!-- red arrow -->
<svg style="left:0;top:0" width="1000" height="539">
  <path d="M588.5 115.5 L601.5 127.5 L598.5 130 L622.5 182 L643 231 L655 262 L637 232 L615.5 184 L591 135 L587.5 133.5 Z" fill="#ee3a44"/>
</svg>

<!-- taskbar -->
<div id="taskbar" class="a"></div>
<div class="a" style="left:0;top:531px;width:1000px;height:2px;background:#1c1c1c"></div>
<svg style="left:0;top:533px" width="1000" height="6">
 <rect x="0" y="0" width="1000" height="1" fill="#c4cad3"/>
 <path d="M12 6Q18.5 0 25 6Z" fill="#d8e6f2"/>
 <path d="M52 6Q58.5 0 65 6Z" fill="#4bc13c"/>
 <rect x="97" y="0" width="43" height="6" fill="#dfe2e7"/><path d="M113 6Q120 1 127 6Z" fill="#8fd08a"/>
 <rect x="143" y="0" width="40" height="6" fill="#e4e3e5"/><path d="M155 6Q162 2 169 6Z" fill="#e9c8c0"/>
 <rect x="183" y="0" width="5" height="6" fill="#707883"/>
 <rect x="188" y="0" width="43" height="6" fill="#dde2e8"/><path d="M203 6Q210 0 217 6Z" fill="#2aa7b8"/>
 <rect x="231" y="0" width="3" height="6" fill="#707883"/>
 <rect x="234" y="0" width="42" height="6" fill="#f2f4f7"/><rect x="245" y="2" width="19" height="4" fill="#1d2a36"/>
 <rect x="955" y="3" width="4" height="3" fill="#eef2f6" opacity="0.8"/><rect x="961" y="3" width="2" height="3" fill="#eef2f6" opacity="0.8"/><rect x="965" y="3" width="4" height="3" fill="#eef2f6" opacity="0.8"/>
 <rect x="990" y="0" width="10" height="6" fill="#b8bccc"/>
</svg>
</body></html>
